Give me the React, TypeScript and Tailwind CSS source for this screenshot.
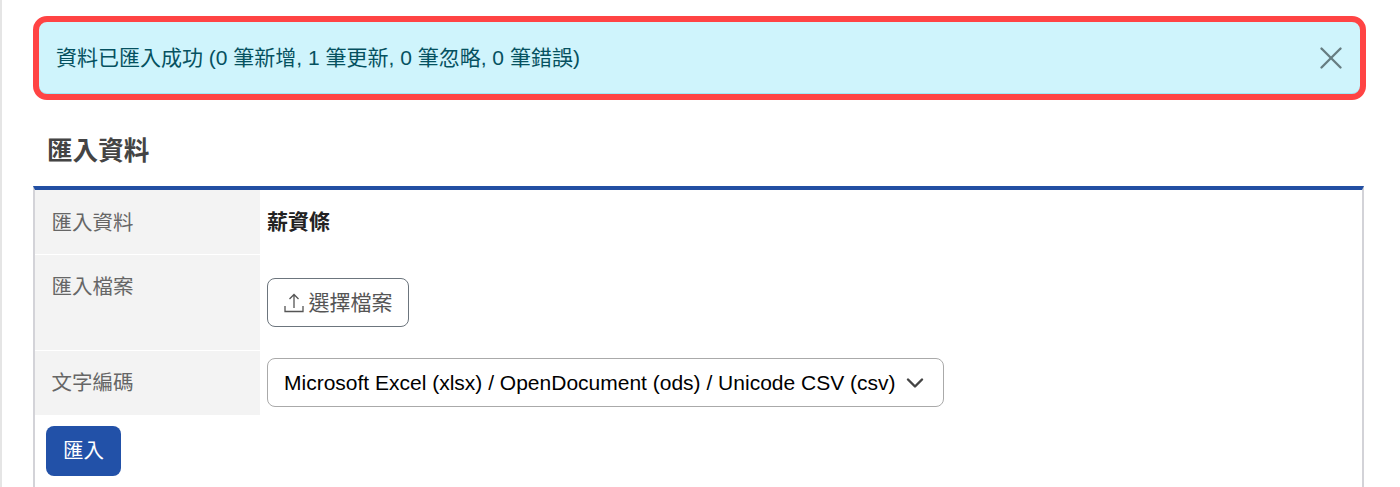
import React from 'react';
import { ChevronDown, X } from 'lucide-react';

const FONT = "font-['Liberation_Sans','Noto_Sans_CJK_TC',sans-serif]";

const Row: React.FC<{ label: string; className: string; labelClass?: string; children: React.ReactNode }> = ({ label, className, labelClass, children }) => (
    <div className={`flex ${className}`}>
        <div className={`w-[225px] shrink-0 bg-[#f3f3f3] pl-[16.5px] text-[20.5px] leading-[28px] text-[#666] ${labelClass ?? ''}`}>{label}</div>
        <div className="flex-1 pl-[7px]">{children}</div>
    </div>
);

const App: React.FC = () => {
    return (
        <div className={`${FONT} h-[487px] w-[1400px] overflow-hidden bg-white border-l-2 border-[#e5e5e5] pl-[31px] pr-[36px] pt-[16px]`}>
            <div className="flex h-[84px] w-[1333px] items-center justify-between rounded-[14px] border-[6px] border-[#ff4444] bg-[#cff4fc] pl-[17px] pr-[10px] shadow-[inset_0_-1px_0_#9eeaf9]">
                <span className="text-[21px] leading-[28px] text-[#055160]">資料已匯入成功 (0 筆新增, 1 筆更新, 0 筆忽略, 0 筆錯誤)</span>
                <X className="size-[38px] text-[#667c80]" strokeWidth={1.5} />
            </div>
            <h2 className="mt-[36px] pl-[14px] text-[25.6px] leading-[30px] font-bold text-[#444]">匯入資料</h2>
            <div className="mt-[20px] h-[320px] w-[1331px] border-x-2 border-[#d3d3d8] border-t-4 border-t-[#224fa3]">
                <Row label="匯入資料" className="h-[65px] border-b border-white" labelClass="pt-[19px]">
                    <div className="pt-[18px] text-[21px] leading-[28px] font-bold text-[#222]">薪資條</div>
                </Row>
                <Row label="匯入檔案" className="h-[96px] border-b border-white" labelClass="pt-[18px]">
                    <div className="pt-[23px]">
                        <button className="flex h-[49px] w-[142px] items-center justify-center gap-[5px] rounded-[8px] border border-[#6c757d] text-[21px] text-[#555]">
                            <svg viewBox="0 0 20 20" className="size-[20px]" fill="none" stroke="currentColor" strokeWidth="1.3">
                                <path d="M1 13v5.5h18V13" />
                                <path d="M10 15V1.5M5.5 6 10 1.5 14.5 6" />
                            </svg>
                            選擇檔案
                        </button>
                    </div>
                </Row>
                <Row label="文字編碼" className="h-[64px]" labelClass="pt-[18px]">
                    <div className="pt-[7px]">
                        <div className="flex h-[49px] w-[677px] items-center justify-between rounded-[8px] border border-[#aaa] pl-[16px] pr-[14px] text-[21px] text-black">
                            <span>Microsoft Excel (xlsx) / OpenDocument (ods) / Unicode CSV (csv)</span>
                            <ChevronDown className="size-[28px] text-[#444]" strokeWidth={2.1} />
                        </div>
                    </div>
                </Row>
                <div className="pl-[11px] pt-[11px]">
                    <button className="h-[50px] w-[75px] rounded-[8px] bg-[#2251a8] text-[20.5px] text-white">匯入</button>
                </div>
            </div>
        </div>
    );
};

export default App;
